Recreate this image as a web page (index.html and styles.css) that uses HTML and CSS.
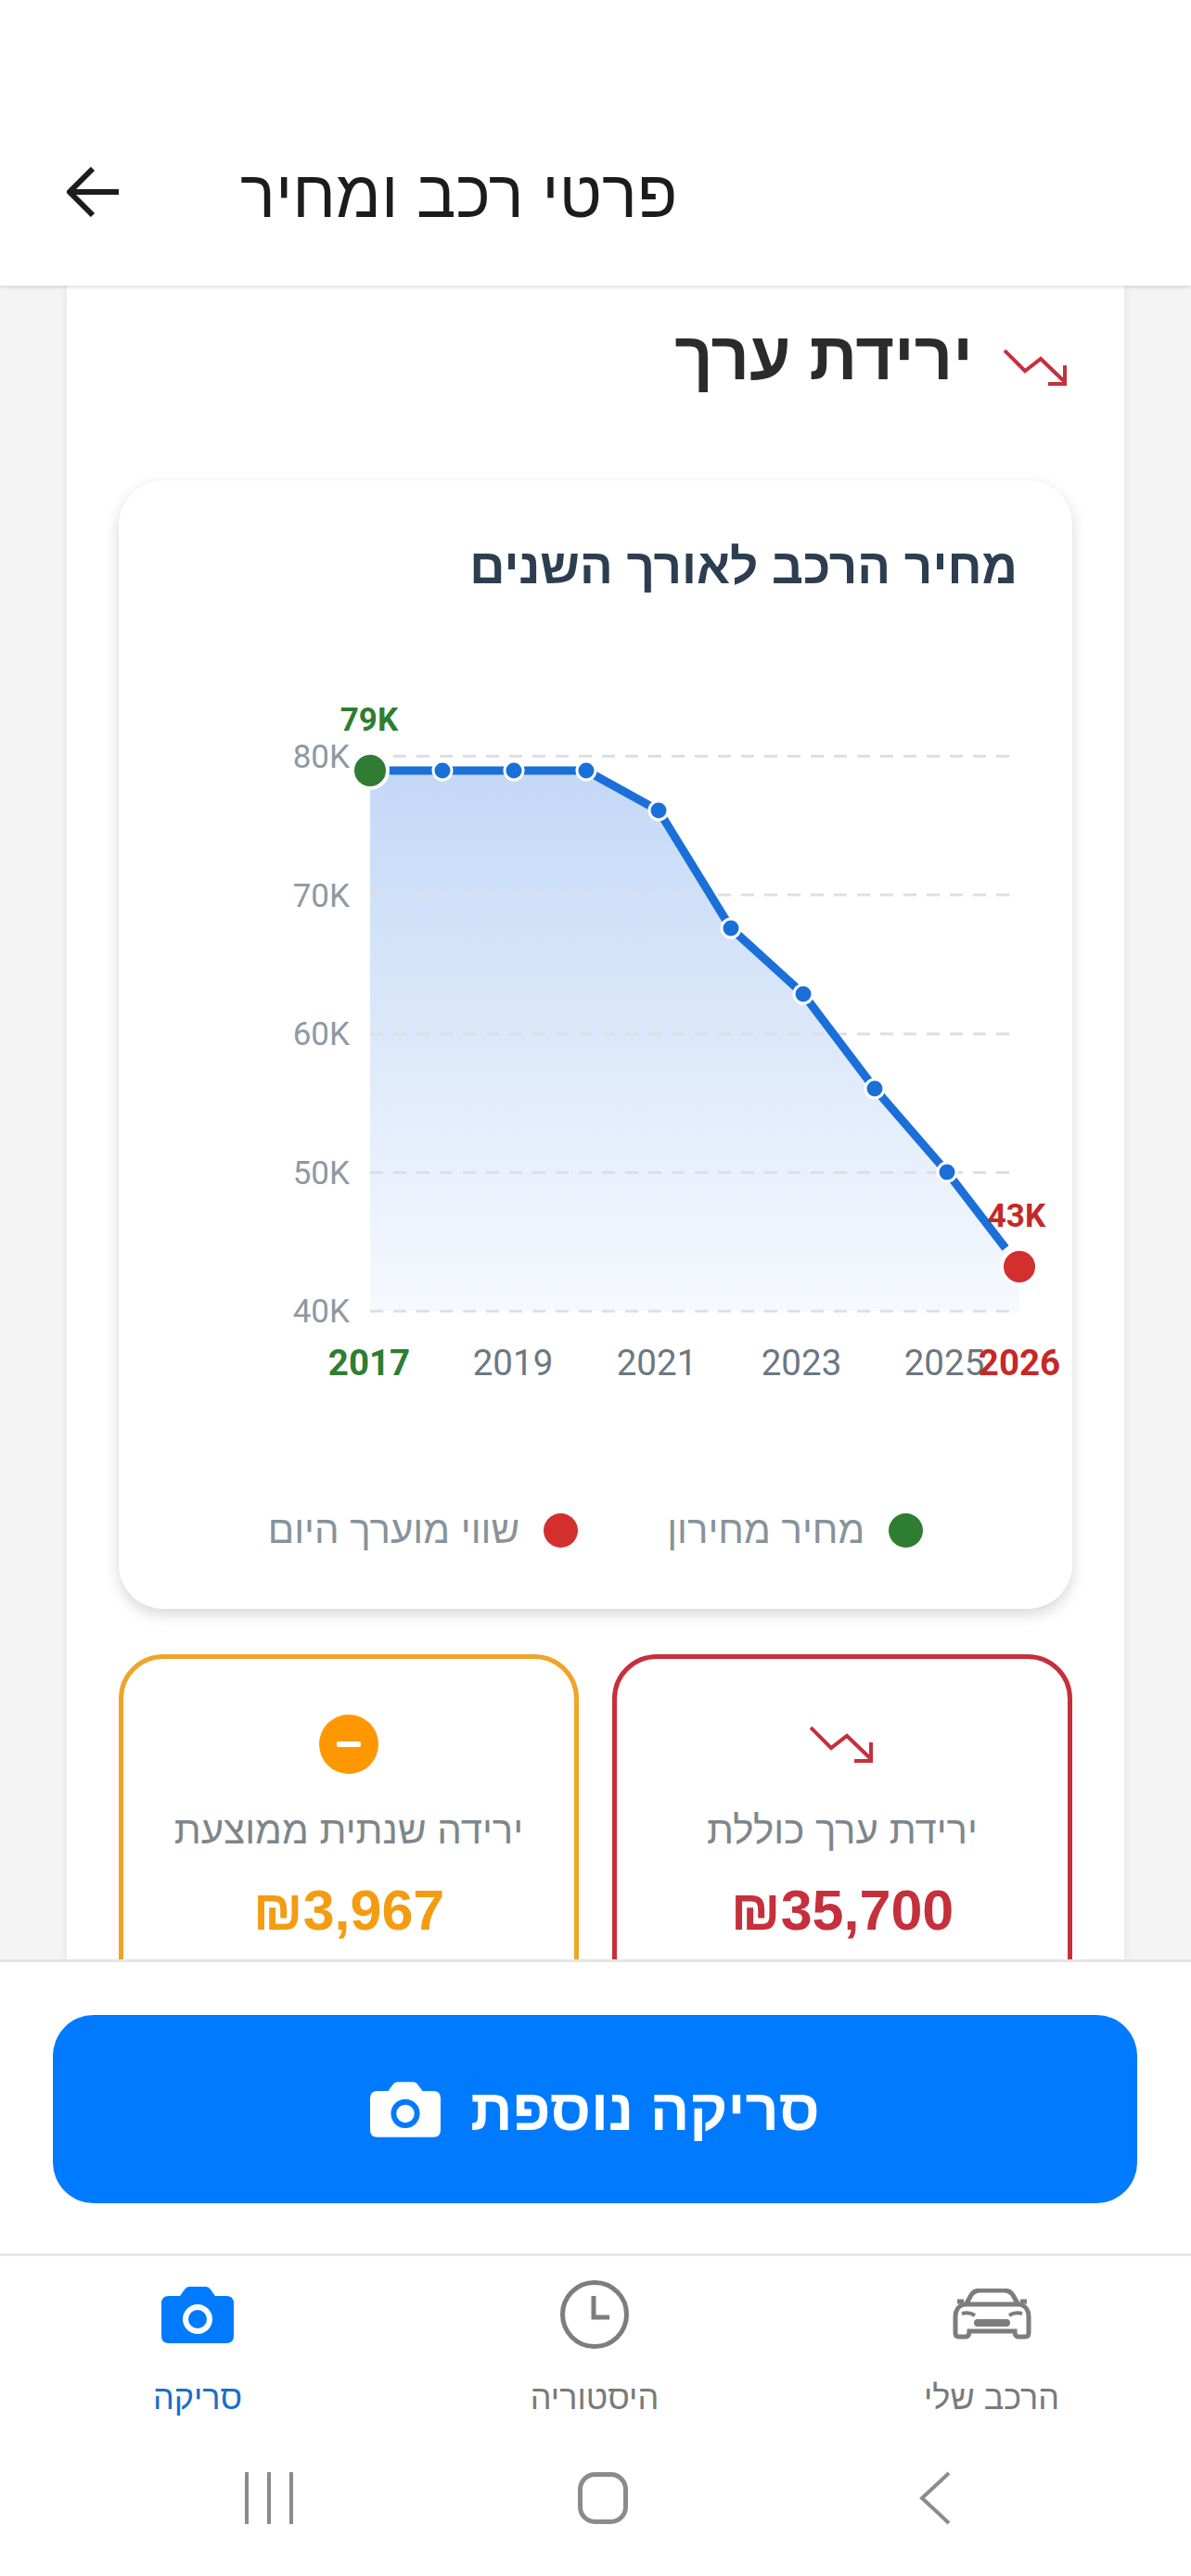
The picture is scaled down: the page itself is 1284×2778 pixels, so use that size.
FILE: index.html
```html
<!DOCTYPE html>
<html lang="he" dir="rtl">
<head>
<meta charset="utf-8">
<title>פרטי רכב ומחיר</title>
<link rel="stylesheet" href="styles.css">
</head>
<body>
<div class="app">
  <header class="top-bar">
    <h1 class="top-title">פרטי רכב ומחיר</h1>
    <svg class="back-arrow" viewBox="0 0 58 54" aria-hidden="true"><path d="M56 27H4M28 2 3 27l25 25"/></svg>
  </header>
  <main class="scroll">
    <section class="panel">
      <div class="panel-head">
        <svg class="trend trend-lg" viewBox="0 0 70 40" aria-hidden="true"><path d="M1 1 23 23 40 10 66 35M66 17V37H48"/></svg>
        <h2 class="panel-title">ירידת ערך</h2>
      </div>
      <div class="chart-card">
        <h3 class="chart-title">מחיר הרכב לאורך השנים</h3>
        <svg class="chart" viewBox="127 740 1029 760">
          <defs>
            <linearGradient id="area" x1="0" y1="0" x2="0" y2="1">
              <stop offset="0" stop-color="#c3d8f6"/>
              <stop offset="1" stop-color="#f6f9fe"/>
            </linearGradient>
          </defs>
          <path class="area" d="M399 831H632L710 874 788 1001 866 1072 943 1174 1021 1264 1099 1366V1414H399Z"/>
          <g class="grid">
            <path d="M399 815.5H1089"/><path d="M399 965H1089"/><path d="M399 1115H1089"/><path d="M399 1264.5H1089"/><path d="M399 1414H1089"/>
          </g>
          <path class="line" d="M399 831H632L710 874 788 1001 866 1072 943 1174 1021 1264 1084 1346"/>
          <g class="dots">
            <circle cx="477" cy="831" r="10"/><circle cx="554" cy="831" r="10"/><circle cx="632" cy="831" r="10"/><circle cx="710" cy="874" r="10"/><circle cx="788" cy="1001" r="10"/><circle cx="866" cy="1072" r="10"/><circle cx="943" cy="1174" r="10"/><circle cx="1021" cy="1264" r="10"/>
          </g>
          <circle class="end end-green" cx="399" cy="831" r="19"/>
          <circle class="end end-red" cx="1099" cy="1366" r="19"/>
          <g class="y-labels">
            <text x="377" y="828">80K</text><text x="377" y="978">70K</text><text x="377" y="1127">60K</text><text x="377" y="1277">50K</text><text x="377" y="1426">40K</text>
          </g>
          <g class="x-labels">
            <text x="553" y="1483">2019</text><text x="708" y="1483">2021</text><text x="864" y="1483">2023</text><text x="1018" y="1483">2025</text>
            <text class="x-green" x="398" y="1483">2017</text><text class="x-red" x="1099" y="1483">2026</text>
          </g>
          <text class="val val-green" x="398" y="788">79K</text>
          <text class="val val-red" x="1096" y="1323">43K</text>
        </svg>
        <div class="legend">
          <div class="legend-item"><span class="dot dot-green"></span><span>מחיר מחירון</span></div>
          <div class="legend-item"><span class="dot dot-red"></span><span>שווי מוערך היום</span></div>
        </div>
      </div>
      <div class="stats">
        <div class="stat stat-red">
          <svg class="trend trend-md" viewBox="0 0 70 40" aria-hidden="true"><path d="M1 1 23 23 40 10 66 35M66 17V37H48"/></svg>
          <div class="stat-label">ירידת ערך כוללת</div>
          <div class="stat-value"><bdi dir="ltr">₪35,700</bdi></div>
        </div>
        <div class="stat stat-orange">
          <svg class="minus" viewBox="0 0 64 64" aria-hidden="true"><circle cx="32" cy="32" r="32"/><rect x="19" y="29" width="26" height="6" rx="2"/></svg>
          <div class="stat-label">ירידה שנתית ממוצעת</div>
          <div class="stat-value"><bdi dir="ltr">₪3,967</bdi></div>
        </div>
      </div>
    </section>
  </main>
  <div class="action-bar">
    <button class="scan-btn" type="button">
      <span>סריקה נוספת</span>
      <svg class="cam cam-white" viewBox="0 0 78 61" aria-hidden="true"><path class="cam-body" d="M8 10H20L25 3Q27 0 30 0H48Q51 0 53 3L58 10H70Q78 10 78 18V53Q78 61 70 61H8Q0 61 0 53V18Q0 10 8 10Z"/><circle class="cam-ring" cx="39" cy="35" r="13"/></svg>
    </button>
  </div>
  <nav class="tabs">
    <div class="tab">
      <svg class="tab-icon car" viewBox="0 0 85 55" aria-hidden="true"><path d="M15 16 20 7Q23 2 30 2H55Q62 2 65 7L70 16M5 14H12M73 14H80M12 17H73"/><path d="M12 17Q3 20 3 30V48Q3 52 7 52H14Q18 52 18 46H67Q67 52 71 52H78Q82 52 82 48V30Q82 20 73 17"/><path class="car-thin" d="M10 27Q18 25 24 29M75 27Q67 25 61 29"/><rect class="car-fill" x="23" y="33" width="39" height="8" rx="4"/></svg>
      <span class="tab-label">הרכב שלי</span>
    </div>
    <div class="tab">
      <svg class="tab-icon clock" viewBox="0 0 74 74" aria-hidden="true"><circle cx="37" cy="37" r="34.5"/><path d="M36 17V40H53"/></svg>
      <span class="tab-label">היסטוריה</span>
    </div>
    <div class="tab tab-active">
      <svg class="tab-icon cam cam-blue" viewBox="0 0 78 61" aria-hidden="true"><path class="cam-body" d="M8 10H20L25 3Q27 0 30 0H48Q51 0 53 3L58 10H70Q78 10 78 18V53Q78 61 70 61H8Q0 61 0 53V18Q0 10 8 10Z"/><circle class="cam-ring" cx="39" cy="35" r="13"/></svg>
      <span class="tab-label">סריקה</span>
    </div>
  </nav>
  <div class="sys-nav">
    <svg class="sys sys-back" viewBox="0 0 34 58" aria-hidden="true"><path d="M32 2 3 29l29 27"/></svg>
    <svg class="sys sys-home" viewBox="0 0 54 56" aria-hidden="true"><rect x="2.5" y="2.5" width="49" height="51" rx="16"/></svg>
    <svg class="sys sys-recent" viewBox="0 0 54 56" aria-hidden="true"><path d="M3 0V56M27 0V56M51 0V56"/></svg>
  </div>
</div>
</body>
</html>
```
FILE: styles.css
```css
* { box-sizing: border-box; margin: 0; padding: 0; }
html, body { background: #fff; }
body { font-family: "Liberation Sans", "Noto Sans", sans-serif; }
.app { width: 1284px; height: 2778px; display: flex; flex-direction: column; overflow: hidden; }

.top-bar { height: 308px; flex: none; background: #fff; display: flex; align-items: flex-end; justify-content: flex-end; gap: 129px; padding: 0 0 74px 72px; box-shadow: 0 2px 4px rgba(0,0,0,.12); position: relative; z-index: 2; }
.top-title { font-size: 71px; line-height: 60px; font-weight: 400; color: #1c1c1c; position: relative; top: 6px; }
.back-arrow { width: 58px; height: 54px; fill: none; stroke: #1c1c1c; stroke-width: 6; }

.scroll { flex: 1; min-height: 0; overflow: hidden; background: #f4f4f4; padding: 0 72px; }
.panel { margin-top: -30px; background: #fff; border-radius: 36px; padding: 68px 56px 60px; box-shadow: 0 2px 10px rgba(0,0,0,.08); }
.panel-head { display: flex; align-items: center; gap: 33px; height: 76px; padding-right: 4px; }
.panel-title { font-size: 72px; line-height: 76px; font-weight: 700; color: #2b2b2b; }
.trend { fill: none; stroke: #c62f3c; stroke-width: 4; }
.trend-lg { width: 70px; height: 40px; margin-top: 26px; }
.trend-md { width: 70px; height: 40px; display: block; }

.chart-card { margin-top: 96px; height: 1217px; background: #fff; border-radius: 48px; box-shadow: 0 6px 16px rgba(0,0,0,.16); padding: 62px 0 0; display: flex; flex-direction: column; }
.chart-title { font-size: 53px; line-height: 62px; font-weight: 700; color: #2c3e50; padding-right: 59px; }
.chart { display: block; width: 1029px; height: 760px; margin-top: 98px; flex: none; direction: ltr; }
.area { fill: url(#area); }
.grid path { stroke: #dcdfe3; stroke-width: 3; stroke-dasharray: 14 11; fill: none; }
.line { fill: none; stroke: #1a6fd9; stroke-width: 9; }
.dots circle { fill: #1a6fd9; stroke: #fff; stroke-width: 3; }
.end { stroke: #fff; stroke-width: 4; }
.end-green { fill: #2e7d32; }
.end-red { fill: #d32f2f; }
.y-labels text { font-family: Roboto, sans-serif; font-size: 35px; fill: #8d99a3; text-anchor: end; }
.x-labels text { font-family: Roboto, sans-serif; font-size: 38.5px; fill: #6c7780; text-anchor: middle; }
.x-labels .x-green { font-weight: 700; fill: #2e7d32; }
.x-labels .x-red { font-weight: 700; fill: #c62828; }
.val { font-family: Roboto, sans-serif; font-size: 35px; font-weight: 700; text-anchor: middle; }
.val-green { fill: #2e7d32; }
.val-red { fill: #c62828; }

.legend { display: flex; justify-content: center; gap: 96px; margin-top: 125px; padding-left: 0; }
.legend-item { display: flex; align-items: center; gap: 26px; font-size: 42px; line-height: 50px; color: #87939a; }
.dot { width: 37px; height: 37px; border-radius: 50%; flex: none; }
.dot-green { background: #2e7d32; }
.dot-red { background: #d32f2f; }

.stats { display: flex; gap: 36px; margin-top: 49px; }
.stat { flex: 1; height: 420px; border: 5px solid; border-radius: 48px; padding-top: 60px; display: flex; flex-direction: column; align-items: center; }
.stat-red { border-color: #c62f3c; }
.stat-orange { border-color: #f0a428; }
.minus { width: 64px; height: 64px; display: block; }
.minus circle { fill: #ff9800; }
.minus rect { fill: #fff; }
.stat-red .trend-md { margin: 13px 0 11px; }
.stat-label { font-size: 42px; line-height: 48px; color: #7d868c; margin-top: 37px; }
.stat-value { font-size: 61px; line-height: 66px; font-weight: 700; margin-top: 29px; }
.stat-red .stat-value { color: #c62f3c; }
.stat-orange .stat-value { color: #f39c12; }

.action-bar { height: 317px; flex: none; background: #fff; border-top: 3px solid #e4e4e4; padding: 57px 58px 0 57px; position: relative; z-index: 1; }
.scan-btn { width: 100%; height: 203px; background: #007aff; border: 0; border-radius: 44px; color: #fff; font: 700 63px/70px "Liberation Sans", sans-serif; display: flex; align-items: center; justify-content: center; gap: 32px; }
.cam { display: block; }
.cam-white { width: 76px; height: 60px; }
.cam-white .cam-body { fill: #fff; }
.cam-white .cam-ring { fill: #fff; stroke: #007aff; stroke-width: 6; }
.cam-blue .cam-body { fill: #007aff; }
.cam-blue .cam-ring { fill: #007aff; stroke: #fff; stroke-width: 6; }

.tabs { flex: none; height: 215px; border-top: 3px solid #e8e8e8; background: #fff; display: flex; padding: 26px 128px 0 126px; justify-content: space-between; }
.tab { width: 174px; display: flex; flex-direction: column; align-items: center; }
.tab-icon { display: block; height: 74px; }
.tab-label { font-size: 36px; line-height: 40px; color: #7a7a7a; margin-top: 33px; }
.tab-active .tab-label { color: #1a6fc9; }
.tab-active .tab-icon { width: 78px; height: 61px; margin: 7px 0 6px; }
.clock { width: 74px; fill: none; stroke: #7d7d7d; stroke-width: 5; }
.car { width: 85px; height: 55px; margin: 9px 0 10px; fill: none; stroke: #7d7d7d; stroke-width: 5; }
.car-thin { stroke-width: 4; }
.car-fill { fill: #7d7d7d; stroke: none; }

.sys-nav { flex: none; height: 133px; background: #fff; display: flex; align-items: center; justify-content: space-between; padding: 0 259px 36px 263px; }
.sys { display: block; fill: none; stroke: #8b8b8b; stroke-width: 4; }
.sys-back { width: 34px; height: 58px; }
.sys-home { width: 54px; height: 56px; stroke-width: 5; margin-right: 8px; }
.sys-recent { width: 54px; height: 56px; }
```
